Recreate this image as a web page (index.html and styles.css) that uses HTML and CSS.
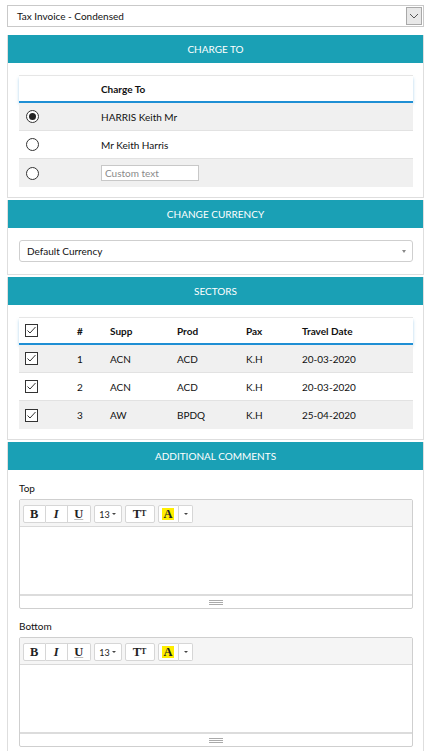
FILE: index.html
```html
<!DOCTYPE html>
<html>
<head>
<meta charset="utf-8">
<link rel="stylesheet" href="styles.css">
</head>
<body>
<div class="page">
  <div class="top-select">
    <span class="top-select-text">Tax Invoice - Condensed</span>
    <span class="top-select-btn">
      <svg width="10" height="6" viewBox="0 0 10 6"><path d="M1 1 L5 5 L9 1" fill="none" stroke="#555" stroke-width="1"/></svg>
    </span>
  </div>

  <div class="panel first">
    <div class="panel-head">CHARGE TO</div>
    <div class="panel-body">
      <table class="grid charge">
        <thead><tr><th class="c-sel"></th><th>Charge To</th></tr></thead>
        <tbody>
          <tr class="alt"><td class="c-sel"><span class="radio on"></span></td><td>HARRIS Keith Mr</td></tr>
          <tr><td class="c-sel"><span class="radio"></span></td><td>Mr Keith Harris</td></tr>
          <tr class="alt"><td class="c-sel"><span class="radio"></span></td><td><span class="custom">Custom text</span></td></tr>
        </tbody>
      </table>
    </div>
  </div>

  <div class="panel">
    <div class="panel-head">CHANGE CURRENCY</div>
    <div class="panel-body currency-body">
      <div class="currency">
        <span>Default Currency</span>
        <span class="caret"></span>
      </div>
    </div>
  </div>

  <div class="panel">
    <div class="panel-head">SECTORS</div>
    <div class="panel-body">
      <table class="grid sectors">
        <thead><tr>
          <th class="s-chk"><span class="chk"><svg width="13" height="13" viewBox="0 0 13 13"><rect x="0.5" y="0.5" width="12" height="12" fill="#fff" stroke="#333"/><path d="M2.5 6.5 L5 9 L10.5 3" fill="none" stroke="#333" stroke-width="1"/></svg></span></th>
          <th class="s-num">#</th><th class="s-supp">Supp</th><th class="s-prod">Prod</th><th class="s-pax">Pax</th><th>Travel Date</th>
        </tr></thead>
        <tbody>
          <tr class="alt">
            <td class="s-chk"><span class="chk"><svg width="13" height="13" viewBox="0 0 13 13"><rect x="0.5" y="0.5" width="12" height="12" fill="#fff" stroke="#333"/><path d="M2.5 6.5 L5 9 L10.5 3" fill="none" stroke="#333" stroke-width="1"/></svg></span></td>
            <td class="s-num">1</td><td>ACN</td><td>ACD</td><td>K.H</td><td>20-03-2020</td>
          </tr>
          <tr>
            <td class="s-chk"><span class="chk"><svg width="13" height="13" viewBox="0 0 13 13"><rect x="0.5" y="0.5" width="12" height="12" fill="#fff" stroke="#333"/><path d="M2.5 6.5 L5 9 L10.5 3" fill="none" stroke="#333" stroke-width="1"/></svg></span></td>
            <td class="s-num">2</td><td>ACN</td><td>ACD</td><td>K.H</td><td>20-03-2020</td>
          </tr>
          <tr class="alt">
            <td class="s-chk"><span class="chk"><svg width="13" height="13" viewBox="0 0 13 13"><rect x="0.5" y="0.5" width="12" height="12" fill="#fff" stroke="#333"/><path d="M2.5 6.5 L5 9 L10.5 3" fill="none" stroke="#333" stroke-width="1"/></svg></span></td>
            <td class="s-num">3</td><td>AW</td><td>BPDQ</td><td>K.H</td><td>25-04-2020</td>
          </tr>
        </tbody>
      </table>
    </div>
  </div>

  <div class="panel last">
    <div class="panel-head">ADDITIONAL COMMENTS</div>
    <div class="panel-body comments">
      <div class="label">Top</div>
      <div class="editor">
        <div class="toolbar">
          <div class="group"><span class="tb b">B</span><span class="tb i">I</span><span class="tb u">U</span></div>
          <div class="group"><span class="tb size">13 <span class="dd"></span></span></div>
          <div class="group"><span class="tb tt">T<small>T</small></span></div>
          <div class="group"><span class="tb color"><span class="hl">A</span></span><span class="tb caretbtn"><span class="dd"></span></span></div>
        </div>
        <div class="content"></div>
        <div class="resize"><span class="grip"></span></div>
      </div>
      <div class="label">Bottom</div>
      <div class="editor">
        <div class="toolbar">
          <div class="group"><span class="tb b">B</span><span class="tb i">I</span><span class="tb u">U</span></div>
          <div class="group"><span class="tb size">13 <span class="dd"></span></span></div>
          <div class="group"><span class="tb tt">T<small>T</small></span></div>
          <div class="group"><span class="tb color"><span class="hl">A</span></span><span class="tb caretbtn"><span class="dd"></span></span></div>
        </div>
        <div class="content"></div>
        <div class="resize"><span class="grip"></span></div>
      </div>
    </div>
  </div>
</div>
</body>
</html>
```

FILE: styles.css
```css
html, body {
  margin: 0;
  padding: 0;
  background: #fff;
}
body {
  font-family: "Lato", "Noto Sans", sans-serif;
  font-size: 10px;
  color: #222;
}
.page {
  width: 428px;
  padding-top: 5px;
}
.top-select {
  margin: 0 4px 0 7px;
  height: 22px;
  box-sizing: border-box;
  border: 1px solid #c9c9c9;
  display: flex;
  align-items: center;
  justify-content: space-between;
}
.top-select-text {
  padding-left: 9px;
  font-size: 10px;
  color: #111;
}
.top-select-btn {
  width: 16px;
  height: 18px;
  margin-right: 1px;
  box-sizing: border-box;
  border: 1px solid #a9a9a9;
  background: #e8e8e8;
  display: flex;
  align-items: center;
  justify-content: center;
}
.panel {
  margin: 0 4px 2px 7px;
  border: 1px solid #dedede;
  border-top: none;
}
.panel.first { margin-top: 8px; }
.panel-head {
  height: 28px;
  background: #1aa0b5;
  color: #fff;
  font-size: 10px;
  display: flex;
  align-items: center;
  justify-content: center;
}
.panel-body {
  padding: 12px 10px 10px 11px;
}
.panel-body.currency-body {
  padding-bottom: 12px;
}
.grid {
  width: 100%;
  border-collapse: collapse;
  font-size: 10px;
}
.grid thead tr {
  box-shadow: 0 2px 3px rgba(30,136,208,0.35);
}
.grid th {
  height: 25px;
  text-align: left;
  font-weight: bold;
  color: #111;
  background: #fff;
  border-top: 1px solid #e6e6e6;
  border-bottom: 2px solid #1f8fd4;
  padding: 0;
}
.grid td {
  height: 27px;
  padding: 0;
  border-bottom: 1px solid #e2e2e2;
  color: #111;
}
.grid tbody tr:last-child td { border-bottom: none; height: 28px; }
.grid tr.alt td { background: #f0f0f0; }
.charge .c-sel {
  width: 82px;
  padding-left: 7px;
  box-sizing: border-box;
}
.radio {
  display: block;
  width: 13px;
  height: 13px;
  box-sizing: border-box;
  border: 1px solid #333;
  border-radius: 50%;
  background: #fff;
  position: relative;
}
.radio.on::after {
  content: "";
  position: absolute;
  left: 2px;
  top: 2px;
  width: 7px;
  height: 7px;
  border-radius: 50%;
  background: #222;
}
.custom {
  display: inline-block;
  width: 98px;
  height: 16px;
  box-sizing: border-box;
  border: 1px solid #c8c8c8;
  background: #fff;
  color: #8a8a8a;
  padding-left: 3px;
  line-height: 14px;
}
.currency {
  height: 22px;
  box-sizing: border-box;
  border: 1px solid #cfcfcf;
  border-radius: 3px;
  display: flex;
  align-items: center;
  justify-content: space-between;
  padding: 0 6px 0 7px;
  font-size: 10px;
  color: #111;
}
.caret {
  width: 0;
  height: 0;
  border-left: 2.5px solid transparent;
  border-right: 2.5px solid transparent;
  border-top: 3px solid #888;
}
.chk { display: block; width: 13px; height: 13px; }
.chk svg { display: block; }
.sectors .s-chk { width: 51px; padding-left: 6px; box-sizing: border-box; }
.sectors .s-num { width: 40px; padding-left: 7px; box-sizing: border-box; }
.sectors .s-supp { width: 67px; }
.sectors .s-prod { width: 69px; }
.sectors .s-pax { width: 56px; }
.comments {
  padding-top: 12px;
}
.label {
  font-size: 10px;
  line-height: 13px;
  color: #111;
  margin-bottom: 4px;
}
.editor {
  border: 1px solid #cfcfcf;
  border-radius: 2px;
  margin-bottom: 11px;
}
.toolbar {
  background: #f5f5f5;
  border-bottom: 1px solid #d9d9d9;
  height: 27px;
  box-sizing: border-box;
  padding: 5px 0 0 3px;
  display: flex;
  gap: 3px;
}
.group {
  display: flex;
}
.tb {
  height: 18px;
  box-sizing: border-box;
  border: 1px solid #d6d6d6;
  background: #fff;
  display: flex;
  align-items: center;
  justify-content: center;
  font-family: "Liberation Serif", serif;
  font-weight: bold;
  font-size: 12.5px;
  color: #222;
}
.group .tb + .tb { border-left: none; }
.group .tb:first-child { border-radius: 2px 0 0 2px; }
.group .tb:last-child { border-radius: 0 2px 2px 0; }
.group .tb:only-child { border-radius: 2px; }
.tb.b, .tb.i, .tb.u { width: 22.5px; }
.tb.i { font-style: italic; }
.tb.u { text-decoration: underline; text-decoration-color: #bbb; }
.tb.size {
  width: 28px;
  font-family: "Lato", sans-serif;
  font-weight: normal;
  font-size: 9px;
}
.tb.tt { width: 30px; font-size: 12.5px; }
.tb.tt small { font-size: 8px; position: relative; top: -1px; }
.tb.color { width: 21px; }
.hl { background: #ffee00; padding: 0 1px; line-height: 12px; }
.tb.caretbtn { width: 14px; }
.dd {
  display: inline-block;
  width: 0;
  height: 0;
  border-left: 2px solid transparent;
  border-right: 2px solid transparent;
  border-top: 2px solid #444;
  margin-left: 2px;
}
.content {
  height: 67px;
  background: #fff;
}
.resize {
  height: 12px;
  border-top: 2px solid #dcdcdc;
  display: flex;
  justify-content: center;
  align-items: center;
}
.grip {
  width: 14px;
  height: 5px;
  border-top: 1px solid #aaa;
  border-bottom: 1px solid #aaa;
  position: relative;
  box-sizing: border-box;
}
.grip::after {
  content: "";
  position: absolute;
  left: 0; right: 0; top: 1px;
  border-top: 1px solid #aaa;
}
```
